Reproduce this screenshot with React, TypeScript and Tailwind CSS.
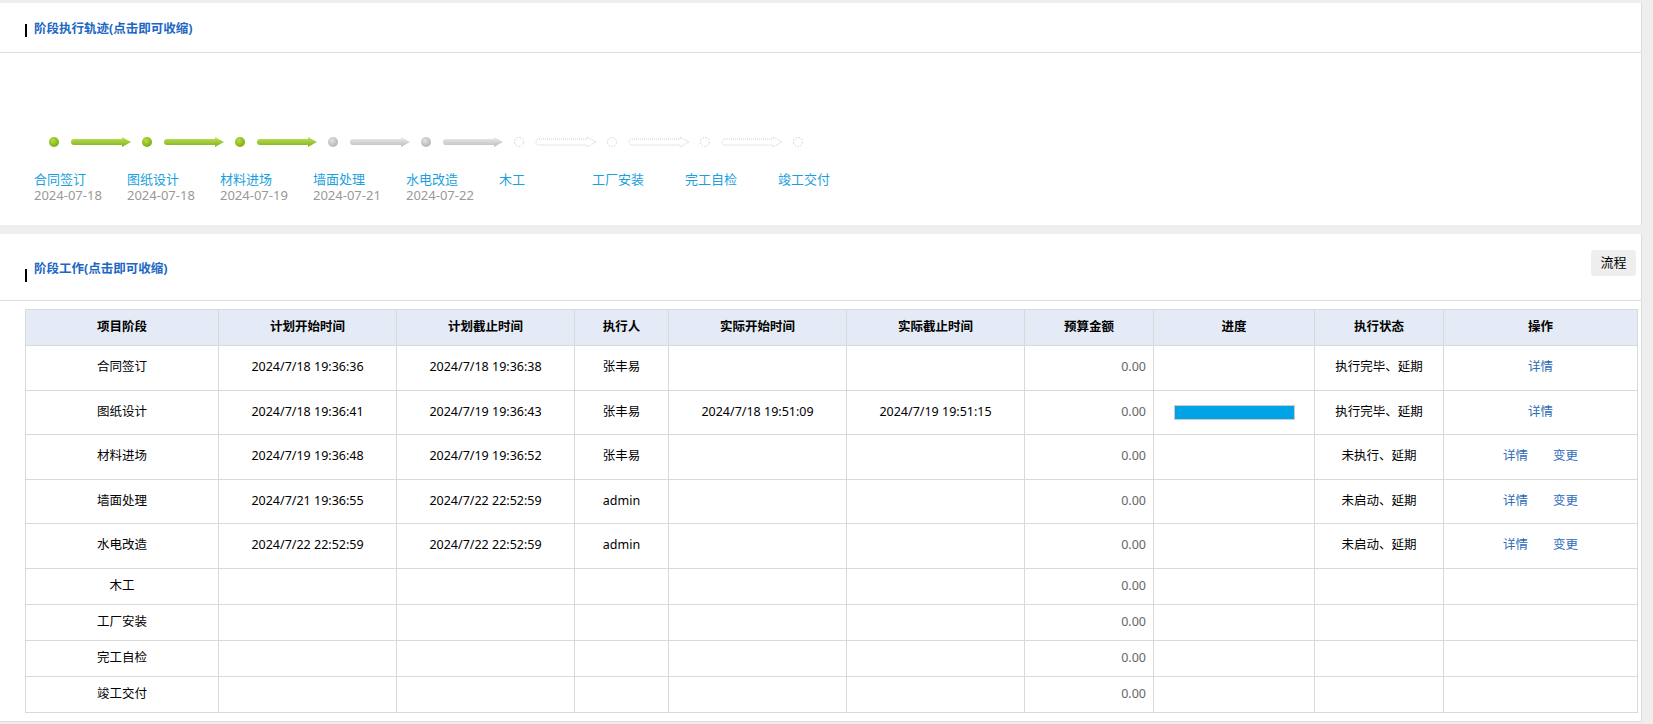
import React from 'react';

type Step = { name: string; date?: string; state: 'done' | 'gray' | 'todo' };

const steps: Step[] = [
  { name: '合同签订', date: '2024-07-18', state: 'done' },
  { name: '图纸设计', date: '2024-07-18', state: 'done' },
  { name: '材料进场', date: '2024-07-19', state: 'done' },
  { name: '墙面处理', date: '2024-07-21', state: 'gray' },
  { name: '水电改造', date: '2024-07-22', state: 'gray' },
  { name: '木工', state: 'todo' },
  { name: '工厂安装', state: 'todo' },
  { name: '完工自检', state: 'todo' },
  { name: '竣工交付', state: 'todo' },
];

type Row = {
  stage: string;
  planStart?: string;
  planEnd?: string;
  user?: string;
  realStart?: string;
  realEnd?: string;
  bar?: boolean;
  status?: string;
  ops?: string[];
};

const rows: Row[] = [
  { stage: '合同签订', planStart: '2024/7/18 19:36:36', planEnd: '2024/7/18 19:36:38', user: '张丰易', status: '执行完毕、延期', ops: ['详情'] },
  { stage: '图纸设计', planStart: '2024/7/18 19:36:41', planEnd: '2024/7/19 19:36:43', user: '张丰易', realStart: '2024/7/18 19:51:09', realEnd: '2024/7/19 19:51:15', bar: true, status: '执行完毕、延期', ops: ['详情'] },
  { stage: '材料进场', planStart: '2024/7/19 19:36:48', planEnd: '2024/7/19 19:36:52', user: '张丰易', status: '未执行、延期', ops: ['详情', '变更'] },
  { stage: '墙面处理', planStart: '2024/7/21 19:36:55', planEnd: '2024/7/22 22:52:59', user: 'admin', status: '未启动、延期', ops: ['详情', '变更'] },
  { stage: '水电改造', planStart: '2024/7/22 22:52:59', planEnd: '2024/7/22 22:52:59', user: 'admin', status: '未启动、延期', ops: ['详情', '变更'] },
  { stage: '木工' },
  { stage: '工厂安装' },
  { stage: '完工自检' },
  { stage: '竣工交付' },
];

const headers = ['项目阶段', '计划开始时间', '计划截止时间', '执行人', '实际开始时间', '实际截止时间', '预算金额', '进度', '执行状态', '操作'];
const widths = [193, 178, 178, 94, 178, 178, 129, 161, 129, 194];

// 轨迹图：圆点 + 箭头
function Track() {
  const cy = 10;
  return (
    <svg width="820" height="20" viewBox="0 0 820 20">
      <defs>
        <linearGradient id="g-green" x1="0" y1="0" x2="0" y2="1">
          <stop offset="0" stopColor="#c4e35a" />
          <stop offset="1" stopColor="#7cb11a" />
        </linearGradient>
        <radialGradient id="d-green" cx="0.4" cy="0.35" r="0.7">
          <stop offset="0" stopColor="#b8df3c" />
          <stop offset="1" stopColor="#76a814" />
        </radialGradient>
        <linearGradient id="g-gray" x1="0" y1="0" x2="0" y2="1">
          <stop offset="0" stopColor="#ececec" />
          <stop offset="1" stopColor="#bdbdbd" />
        </linearGradient>
        <radialGradient id="d-gray" cx="0.4" cy="0.35" r="0.7">
          <stop offset="0" stopColor="#e2e2e2" />
          <stop offset="1" stopColor="#b2b2b2" />
        </radialGradient>
      </defs>
      {steps.map((s, i) => {
        const x = 54 + 93 * i;
        const ax = 71 + 93 * i;
        const ex = ax + 60;
        const arrowPath = `M${ax + 3} ${cy - 3} H${ex - 9} V${cy - 5} L${ex} ${cy} L${ex - 9} ${cy + 5} V${cy + 3} H${ax + 3} A3 3 0 0 1 ${ax + 3} ${cy - 3} Z`;
        const last = i === steps.length - 1;
        if (s.state === 'todo') {
          return (
            <g key={i}>
              <circle cx={x} cy={cy} r={4.5} fill="none" stroke="#cfcfcf" strokeWidth="1" strokeDasharray="1.5 1.5" />
              {!last && <path d={arrowPath} fill="none" stroke="#cfcfcf" strokeWidth="1" strokeDasharray="1 1" />}
            </g>
          );
        }
        const c = s.state === 'done' ? 'green' : 'gray';
        return (
          <g key={i}>
            <circle cx={x} cy={cy} r={5} fill={`url(#d-${c})`} />
            {!last && <path d={arrowPath} fill={`url(#g-${c})`} />}
          </g>
        );
      })}
    </svg>
  );
}

function SectionTitle({ text, barOffset }: { text: string; barOffset: string }) {
  return (
    <div className="flex items-start pl-[25px]">
      <span className={`w-[2px] h-[13px] bg-black ${barOffset}`} />
      <span className="ml-[7px] text-[12.5px] leading-[16px] font-bold text-[#1c66c4]">{text}</span>
    </div>
  );
}

export default function App() {
  return (
    <div className="min-h-screen bg-[#eeeeee] pt-[3px] font-['Noto_Sans','Noto_Sans_CJK_SC',sans-serif] text-black">
      {/* 阶段执行轨迹 */}
      <div className="w-[1642px] bg-white border-r border-[#dddddd]">
        <div className="h-[50px] border-b border-[#dddddd] pt-[18px]">
          <SectionTitle text="阶段执行轨迹(点击即可收缩)" barOffset="mt-[3px]" />
        </div>
        <div className="h-[172px] pt-[79px]">
          <Track />
          <div className="flex pl-[34px] mt-[19px]">
            {steps.map((s) => (
              <div key={s.name} className="w-[93px] text-[13px] leading-[16px]">
                <div className="text-[#1a9fe0]">{s.name}</div>
                {s.date && <div className="text-[#999999]">{s.date}</div>}
              </div>
            ))}
          </div>
        </div>
      </div>

      {/* 阶段工作 */}
      <div className="mt-[9px] w-[1642px] bg-white border-r border-b border-[#dddddd] pb-[8px]">
        <div className="h-[67px] border-b border-[#dddddd] flex justify-between items-start">
          <div className="pt-[27px]">
            <SectionTitle text="阶段工作(点击即可收缩)" barOffset="mt-[8px]" />
          </div>
          <button className="mt-[16px] mr-[5px] w-[45px] h-[26px] rounded-[3px] bg-[#eeeeee] text-[13px] text-black">流程</button>
        </div>
        <table className="mt-[8px] ml-[25px] w-[1612px] table-fixed border-collapse text-[12.5px]">
          <colgroup>
            {widths.map((w, i) => (
              <col key={i} style={{ width: w }} />
            ))}
          </colgroup>
          <thead>
            <tr className="h-[36px] bg-[#e4ebf6]">
              {headers.map((h) => (
                <th key={h} className="border border-[#d9d9d9] font-bold text-center">{h}</th>
              ))}
            </tr>
          </thead>
          <tbody>
            {rows.map((r) => (
              <tr key={r.stage} className={r.status ? 'h-[44.5px]' : 'h-[36.2px]'}>
                <td className="border border-[#d9d9d9] text-center">{r.stage}</td>
                <td className="border border-[#d9d9d9] text-center">{r.planStart}</td>
                <td className="border border-[#d9d9d9] text-center">{r.planEnd}</td>
                <td className="border border-[#d9d9d9] text-center">{r.user}</td>
                <td className="border border-[#d9d9d9] text-center">{r.realStart}</td>
                <td className="border border-[#d9d9d9] text-center">{r.realEnd}</td>
                <td className="border border-[#d9d9d9] text-right pr-[7px] text-[#666666]">0.00</td>
                <td className="border border-[#d9d9d9]">
                  {r.bar && (
                    <div className="mx-auto w-[121px] h-[15px] bg-[#00a3e6] border border-[#cccccc]" />
                  )}
                </td>
                <td className="border border-[#d9d9d9] text-center">{r.status}</td>
                <td className="border border-[#d9d9d9] text-center">
                  <div className="flex justify-center gap-[25px]">
                    {r.ops?.map((o) => (
                      <a key={o} className="text-[#2d6cb8] cursor-pointer">{o}</a>
                    ))}
                  </div>
                </td>
              </tr>
            ))}
          </tbody>
        </table>
      </div>
    </div>
  );
}
